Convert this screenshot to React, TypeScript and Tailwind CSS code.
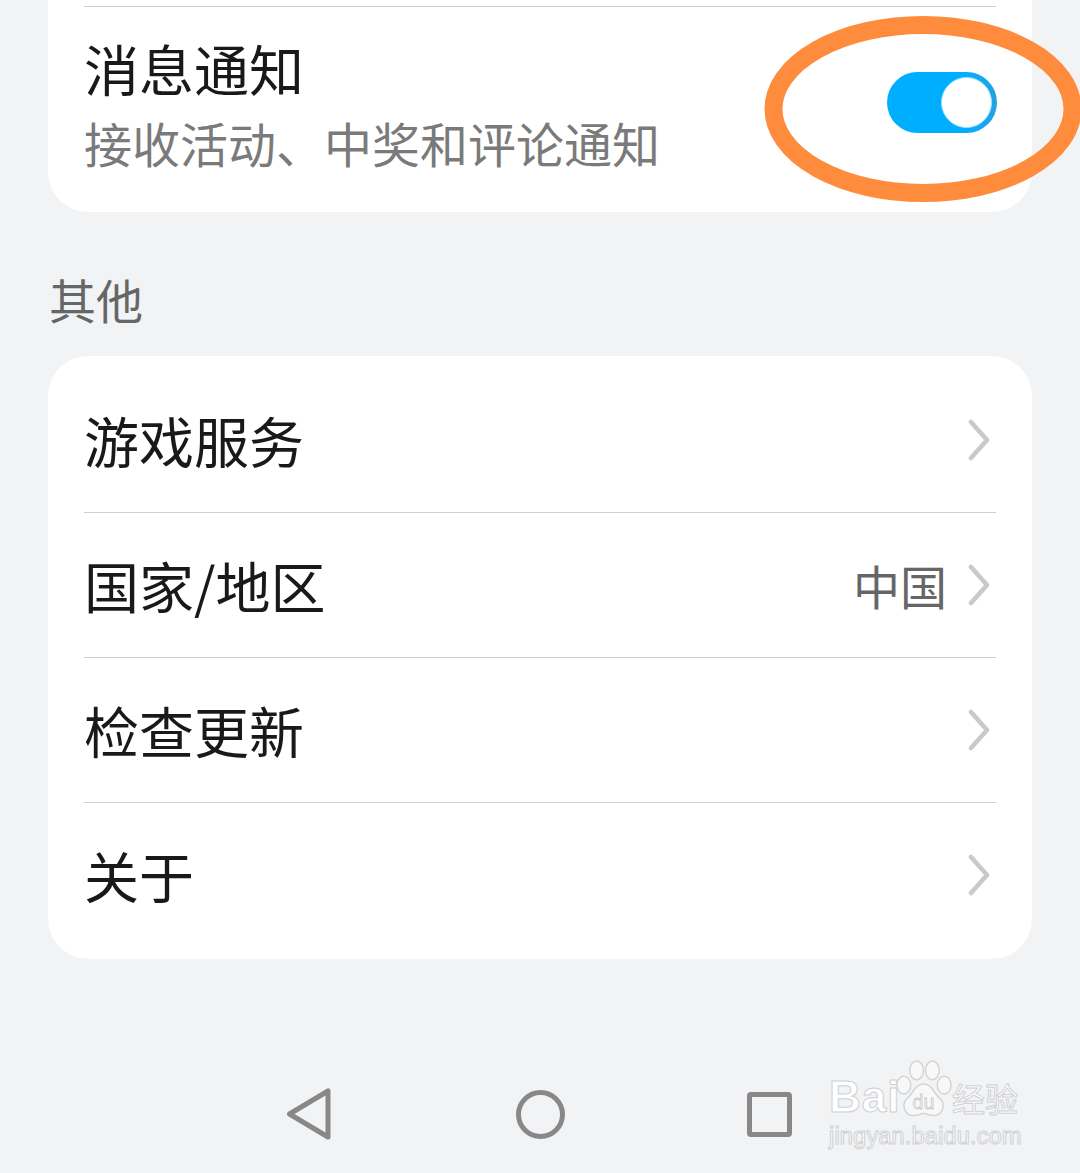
const font = "font-['Noto_Sans_CJK_SC','Noto_Sans',sans-serif]";

function Chevron() {
  return (
    <svg width="24" height="42" viewBox="0 0 24 42" fill="none" className="shrink-0">
      <path d="M4 3 L20 21 L4 39" stroke="#c9c9c9" strokeWidth="4.5" strokeLinecap="round" strokeLinejoin="round" />
    </svg>
  );
}

function Row({ label, value, className }: { label: string; value?: string; className: string }) {
  return (
    <div className={`flex items-center justify-between pr-[5px] ${className}`}>
      <span className="text-[55px] leading-[64px] text-[#191919] -translate-y-px">{label}</span>
      <div className="flex items-center gap-[20px]">
        {value && <span className="text-[47px] leading-[54px] text-[#666666]">{value}</span>}
        <Chevron />
      </div>
    </div>
  );
}

function Watermark() {
  const outline = "text-white [-webkit-text-stroke:1px_#cfd0d2] font-['Liberation_Sans',sans-serif]";
  return (
    <div className="absolute left-[829px] top-[1058px] w-[200px] flex flex-col">
      <div className="flex items-end h-[62px]">
        <span className={`${outline} text-[44px] leading-[46px] font-bold w-[66px] tracking-[1px]`}>Bai</span>
        <svg width="57" height="60" viewBox="0 0 58 60" className="shrink-0">
          <g fill="#f8f8f9" stroke="#d3d4d6" strokeWidth="1.5">
            <ellipse cx="9" cy="25" rx="7" ry="9" />
            <ellipse cx="22" cy="10" rx="7" ry="9.5" />
            <ellipse cx="38" cy="10" rx="7" ry="9.5" />
            <ellipse cx="50" cy="25" rx="7" ry="9" />
            <path d="M29 24 C38 24 39 33 45 38 C52 44 49 56 39 56 C34 56 33 54 29 54 C25 54 24 56 19 56 C9 56 6 44 13 38 C19 33 20 24 29 24 Z" />
          </g>
          <text x="29" y="49" textAnchor="middle" fontSize="20" fontFamily="Liberation Sans" fill="#f8f8f9" stroke="#c8c9cb" strokeWidth="0.8">du</text>
        </svg>
        <span className={`${outline} font-['Noto_Sans_CJK_SC',sans-serif] text-[33px] leading-[44px] whitespace-nowrap`}>经验</span>
      </div>
      <span className={`${outline} text-[23.5px] leading-[24px] mt-[4px] font-normal tracking-[0.2px] whitespace-nowrap`}>jingyan.baidu.com</span>
    </div>
  );
}

export default function App() {
  return (
    <div className={`relative h-[1173px] w-[1080px] overflow-hidden bg-[#f1f3f5] ${font}`}>
      <div className="mx-[48px] h-[212px] rounded-b-[40px] bg-white px-[36px] pt-[6px]">
        <div className="h-px bg-[#cfcfcf]" />
        <div className="flex justify-between">
          <div className="flex flex-col pt-[28px]">
            <span className="text-[55px] leading-[64px] text-[#191919]">消息通知</span>
            <span className="mt-[15px] text-[48px] leading-[56px] text-[#7a7a7a] whitespace-nowrap">接收活动、中奖和评论通知</span>
          </div>
          <div className="mt-[65px] -mr-px flex h-[61px] w-[110px] items-center justify-end rounded-full bg-gradient-to-r from-[#00aeff] from-70% to-[#1fa3e2] pr-[5px]">
            <div className="h-[51px] w-[51px] rounded-full border border-[#a5e4fb] bg-white" />
          </div>
        </div>
      </div>

      <div className="ml-[49px] mt-[58px] text-[47px] leading-[58px] text-[#666666]">其他</div>

      <div className="mx-[48px] mt-[28px] rounded-[40px] bg-white px-[36px]">
        <Row label="游戏服务" className="h-[156px] pt-[12px]" />
        <div className="h-px bg-[#cfcfcf]" />
        <Row label="国家/地区" value="中国" className="h-[144px]" />
        <div className="h-px bg-[#cfcfcf]" />
        <Row label="检查更新" className="h-[144px]" />
        <div className="h-px bg-[#cfcfcf]" />
        <Row label="关于" className="h-[156px] pb-[12px]" />
      </div>

      <div className="mt-[129px] flex items-center pl-[286px]">
        <svg width="46" height="52" viewBox="0 0 46 52" fill="none">
          <path d="M3.5 26 L42 3 V49 Z" stroke="#888888" strokeWidth="5" strokeLinejoin="round" />
        </svg>
        <div className="ml-[184px] h-[49px] w-[49px] rounded-full border-[5px] border-[#888888]" />
        <div className="ml-[182px] h-[45px] w-[45px] rounded-[4px] border-[5px] border-[#888888]" />
      </div>

      <Watermark />

      <svg width="320" height="190" viewBox="0 0 320 190" fill="none" className="absolute left-[763px] top-[14px]">
        <ellipse cx="160" cy="95" rx="149.5" ry="84" stroke="#ff8c3c" strokeWidth="18" />
      </svg>
    </div>
  );
}
